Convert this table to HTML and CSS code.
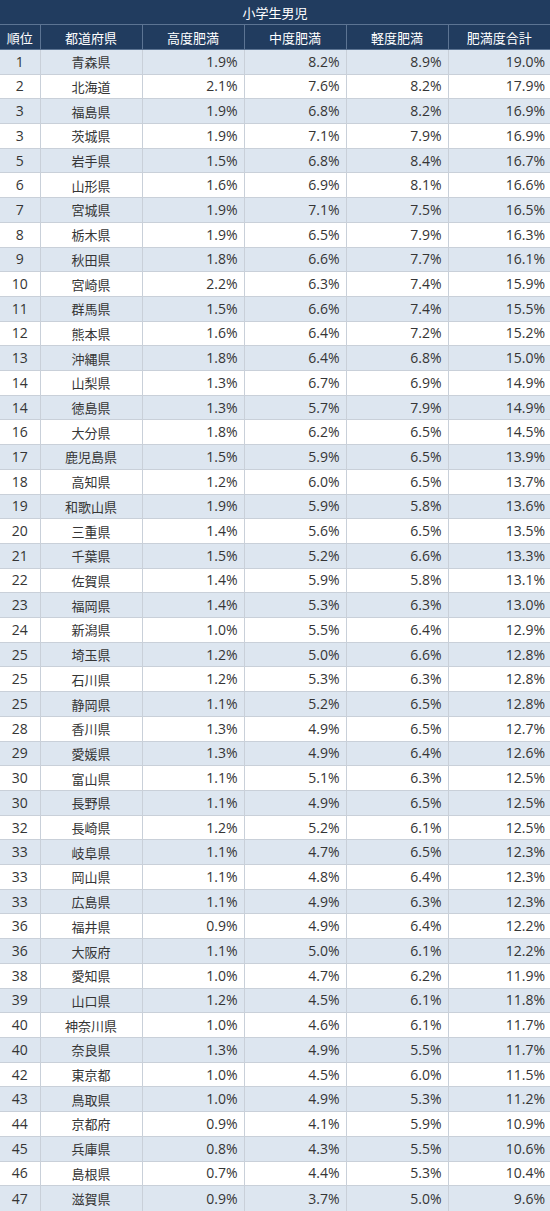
FILE: index.html
```html
<!DOCTYPE html>
<html lang="ja">
<head>
<meta charset="utf-8">
<link rel="stylesheet" href="styles.css">
</head>
<body>
<table class="tbl">
<colgroup>
<col class="c-rank"><col class="c-pref"><col class="c-num"><col class="c-num"><col class="c-num"><col class="c-num">
</colgroup>
<thead>
<tr class="title"><th colspan="6">小学生男児</th></tr>
<tr class="head"><th>順位</th><th>都道府県</th><th>高度肥満</th><th>中度肥満</th><th>軽度肥満</th><th>肥満度合計</th></tr>
</thead>
<tbody>
<tr><td>1</td><td>青森県</td><td>1.9%</td><td>8.2%</td><td>8.9%</td><td>19.0%</td></tr>
<tr><td>2</td><td>北海道</td><td>2.1%</td><td>7.6%</td><td>8.2%</td><td>17.9%</td></tr>
<tr><td>3</td><td>福島県</td><td>1.9%</td><td>6.8%</td><td>8.2%</td><td>16.9%</td></tr>
<tr><td>3</td><td>茨城県</td><td>1.9%</td><td>7.1%</td><td>7.9%</td><td>16.9%</td></tr>
<tr><td>5</td><td>岩手県</td><td>1.5%</td><td>6.8%</td><td>8.4%</td><td>16.7%</td></tr>
<tr><td>6</td><td>山形県</td><td>1.6%</td><td>6.9%</td><td>8.1%</td><td>16.6%</td></tr>
<tr><td>7</td><td>宮城県</td><td>1.9%</td><td>7.1%</td><td>7.5%</td><td>16.5%</td></tr>
<tr><td>8</td><td>栃木県</td><td>1.9%</td><td>6.5%</td><td>7.9%</td><td>16.3%</td></tr>
<tr><td>9</td><td>秋田県</td><td>1.8%</td><td>6.6%</td><td>7.7%</td><td>16.1%</td></tr>
<tr><td>10</td><td>宮崎県</td><td>2.2%</td><td>6.3%</td><td>7.4%</td><td>15.9%</td></tr>
<tr><td>11</td><td>群馬県</td><td>1.5%</td><td>6.6%</td><td>7.4%</td><td>15.5%</td></tr>
<tr><td>12</td><td>熊本県</td><td>1.6%</td><td>6.4%</td><td>7.2%</td><td>15.2%</td></tr>
<tr><td>13</td><td>沖縄県</td><td>1.8%</td><td>6.4%</td><td>6.8%</td><td>15.0%</td></tr>
<tr><td>14</td><td>山梨県</td><td>1.3%</td><td>6.7%</td><td>6.9%</td><td>14.9%</td></tr>
<tr><td>14</td><td>徳島県</td><td>1.3%</td><td>5.7%</td><td>7.9%</td><td>14.9%</td></tr>
<tr><td>16</td><td>大分県</td><td>1.8%</td><td>6.2%</td><td>6.5%</td><td>14.5%</td></tr>
<tr><td>17</td><td>鹿児島県</td><td>1.5%</td><td>5.9%</td><td>6.5%</td><td>13.9%</td></tr>
<tr><td>18</td><td>高知県</td><td>1.2%</td><td>6.0%</td><td>6.5%</td><td>13.7%</td></tr>
<tr><td>19</td><td>和歌山県</td><td>1.9%</td><td>5.9%</td><td>5.8%</td><td>13.6%</td></tr>
<tr><td>20</td><td>三重県</td><td>1.4%</td><td>5.6%</td><td>6.5%</td><td>13.5%</td></tr>
<tr><td>21</td><td>千葉県</td><td>1.5%</td><td>5.2%</td><td>6.6%</td><td>13.3%</td></tr>
<tr><td>22</td><td>佐賀県</td><td>1.4%</td><td>5.9%</td><td>5.8%</td><td>13.1%</td></tr>
<tr><td>23</td><td>福岡県</td><td>1.4%</td><td>5.3%</td><td>6.3%</td><td>13.0%</td></tr>
<tr><td>24</td><td>新潟県</td><td>1.0%</td><td>5.5%</td><td>6.4%</td><td>12.9%</td></tr>
<tr><td>25</td><td>埼玉県</td><td>1.2%</td><td>5.0%</td><td>6.6%</td><td>12.8%</td></tr>
<tr><td>25</td><td>石川県</td><td>1.2%</td><td>5.3%</td><td>6.3%</td><td>12.8%</td></tr>
<tr><td>25</td><td>静岡県</td><td>1.1%</td><td>5.2%</td><td>6.5%</td><td>12.8%</td></tr>
<tr><td>28</td><td>香川県</td><td>1.3%</td><td>4.9%</td><td>6.5%</td><td>12.7%</td></tr>
<tr><td>29</td><td>愛媛県</td><td>1.3%</td><td>4.9%</td><td>6.4%</td><td>12.6%</td></tr>
<tr><td>30</td><td>富山県</td><td>1.1%</td><td>5.1%</td><td>6.3%</td><td>12.5%</td></tr>
<tr><td>30</td><td>長野県</td><td>1.1%</td><td>4.9%</td><td>6.5%</td><td>12.5%</td></tr>
<tr><td>32</td><td>長崎県</td><td>1.2%</td><td>5.2%</td><td>6.1%</td><td>12.5%</td></tr>
<tr><td>33</td><td>岐阜県</td><td>1.1%</td><td>4.7%</td><td>6.5%</td><td>12.3%</td></tr>
<tr><td>33</td><td>岡山県</td><td>1.1%</td><td>4.8%</td><td>6.4%</td><td>12.3%</td></tr>
<tr><td>33</td><td>広島県</td><td>1.1%</td><td>4.9%</td><td>6.3%</td><td>12.3%</td></tr>
<tr><td>36</td><td>福井県</td><td>0.9%</td><td>4.9%</td><td>6.4%</td><td>12.2%</td></tr>
<tr><td>36</td><td>大阪府</td><td>1.1%</td><td>5.0%</td><td>6.1%</td><td>12.2%</td></tr>
<tr><td>38</td><td>愛知県</td><td>1.0%</td><td>4.7%</td><td>6.2%</td><td>11.9%</td></tr>
<tr><td>39</td><td>山口県</td><td>1.2%</td><td>4.5%</td><td>6.1%</td><td>11.8%</td></tr>
<tr><td>40</td><td>神奈川県</td><td>1.0%</td><td>4.6%</td><td>6.1%</td><td>11.7%</td></tr>
<tr><td>40</td><td>奈良県</td><td>1.3%</td><td>4.9%</td><td>5.5%</td><td>11.7%</td></tr>
<tr><td>42</td><td>東京都</td><td>1.0%</td><td>4.5%</td><td>6.0%</td><td>11.5%</td></tr>
<tr><td>43</td><td>鳥取県</td><td>1.0%</td><td>4.9%</td><td>5.3%</td><td>11.2%</td></tr>
<tr><td>44</td><td>京都府</td><td>0.9%</td><td>4.1%</td><td>5.9%</td><td>10.9%</td></tr>
<tr><td>45</td><td>兵庫県</td><td>0.8%</td><td>4.3%</td><td>5.5%</td><td>10.6%</td></tr>
<tr><td>46</td><td>島根県</td><td>0.7%</td><td>4.4%</td><td>5.3%</td><td>10.4%</td></tr>
<tr><td>47</td><td>滋賀県</td><td>0.9%</td><td>3.7%</td><td>5.0%</td><td>9.6%</td></tr>
</tbody>
</table>
</body>
</html>
```

FILE: styles.css
```css
html, body {
  margin: 0;
  padding: 0;
  background: #ffffff;
}

.tbl {
  width: 550px;
  height: 1211px;
  border-collapse: collapse;
  table-layout: fixed;
  font-family: "Open Sans", "Noto Sans CJK JP", sans-serif;
  font-size: 14px;
  color: #353535;
}

.c-rank { width: 40px; }
.c-pref { width: 102px; }
.c-num { width: 102px; }

.tbl tr {
  height: 24.7px;
}

.tbl th {
  background: #213c5f;
  color: #ffffff;
  font-weight: normal;
  font-family: "Noto Sans CJK JP", sans-serif;
  font-size: 13px;
  padding: 0;
  text-align: center;
  border: 1px solid #5c7493;
}

.title th {
  border-top: none;
  border-left: none;
  border-right: none;
}

.head th:first-child { border-left: none; }
.head th:last-child { border-right: none; }

.tbl td {
  padding: 0 6px 0 4px;
  border: 1px solid #c9d0d9;
  text-align: right;
  line-height: 1;
}

.tbl td:first-child {
  text-align: center;
  padding: 0;
  border-left: none;
}

.tbl td:nth-child(2) {
  text-align: center;
  padding: 0;
  font-family: "Noto Sans CJK JP", sans-serif;
  font-size: 13px;
}

.tbl td:last-child {
  border-right: none;
  padding-right: 5px;
}

.tbl tbody tr:nth-child(odd) td {
  background: #dde6f0;
}

.tbl tbody tr:last-child td {
  border-bottom: none;
}
```
